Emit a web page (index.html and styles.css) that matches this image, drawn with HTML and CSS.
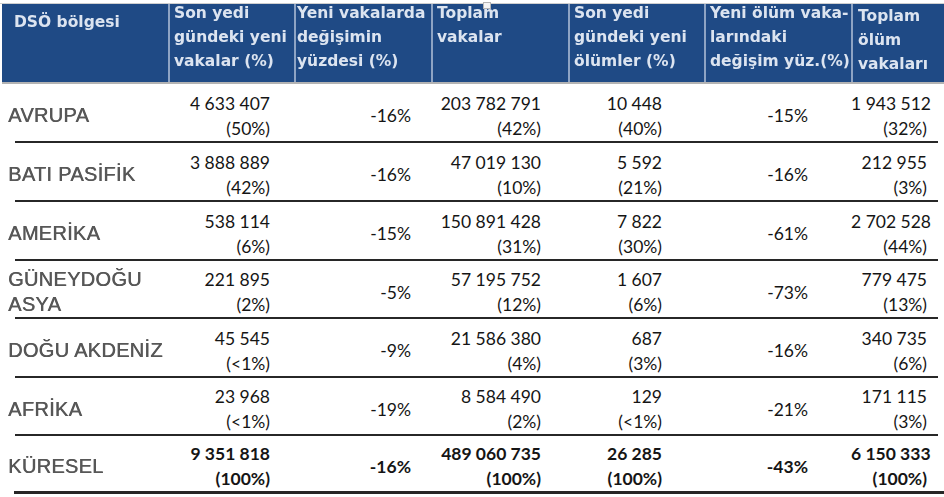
FILE: index.html
```html
<!DOCTYPE html>
<html lang="tr">
<head>
<meta charset="utf-8">
<title>DSÖ bölgeleri</title>
<link rel="stylesheet" href="styles.css">
</head>
<body>
<div class="page">
  <div class="topstrip"></div>
  <span class="handle"></span>
  <div class="table">
    <div class="head">
      <div class="hc h0"><span>DSÖ bölgesi</span></div>
      <div class="hc h1"><span>Son yedi<br>gündeki yeni<br>vakalar (%)</span></div>
      <div class="hc h2"><span>Yeni vakalarda<br>değişimin<br>yüzdesi (%)</span></div>
      <div class="hc h3"><span>Toplam<br>vakalar</span></div>
      <div class="hc h4"><span>Son yedi<br>gündeki yeni<br>ölümler (%)</span></div>
      <div class="hc h5"><span>Yeni ölüm vaka-<br>larındaki<br>değişim yüz.(%)</span></div>
      <div class="hc h6"><span>Toplam<br>ölüm<br>vakaları</span></div>
    </div>

    <div class="row r1">
      <div class="name">AVRUPA</div>
      <div class="v">4 633 407<br>(50%)</div>
      <div class="v">-16%</div>
      <div class="v">203 782 791<br>(42%)</div>
      <div class="v">10 448<br>(40%)</div>
      <div class="v">-15%</div>
      <div class="v">1 943 512<br>(32%)</div>
    </div>
    <div class="row r2">
      <div class="name">BATI PASİFİK</div>
      <div class="v">3 888 889<br>(42%)</div>
      <div class="v">-16%</div>
      <div class="v">47 019 130<br>(10%)</div>
      <div class="v">5 592<br>(21%)</div>
      <div class="v">-16%</div>
      <div class="v">212 955<br>(3%)</div>
    </div>
    <div class="row r3">
      <div class="name">AMERİKA</div>
      <div class="v">538 114<br>(6%)</div>
      <div class="v">-15%</div>
      <div class="v">150 891 428<br>(31%)</div>
      <div class="v">7 822<br>(30%)</div>
      <div class="v">-61%</div>
      <div class="v">2 702 528<br>(44%)</div>
    </div>
    <div class="row r4">
      <div class="name">GÜNEYDOĞU<br>ASYA</div>
      <div class="v">221 895<br>(2%)</div>
      <div class="v">-5%</div>
      <div class="v">57 195 752<br>(12%)</div>
      <div class="v">1 607<br>(6%)</div>
      <div class="v">-73%</div>
      <div class="v">779 475<br>(13%)</div>
    </div>
    <div class="row r5">
      <div class="name">DOĞU AKDENİZ</div>
      <div class="v">45 545<br>(&lt;1%)</div>
      <div class="v">-9%</div>
      <div class="v">21 586 380<br>(4%)</div>
      <div class="v">687<br>(3%)</div>
      <div class="v">-16%</div>
      <div class="v">340 735<br>(6%)</div>
    </div>
    <div class="row r6">
      <div class="name">AFRİKA</div>
      <div class="v">23 968<br>(&lt;1%)</div>
      <div class="v">-19%</div>
      <div class="v">8 584 490<br>(2%)</div>
      <div class="v">129<br>(&lt;1%)</div>
      <div class="v">-21%</div>
      <div class="v">171 115<br>(3%)</div>
    </div>
    <div class="row total">
      <div class="name">KÜRESEL</div>
      <div class="v">9 351 818<br>(100%)</div>
      <div class="v">-16%</div>
      <div class="v">489 060 735<br>(100%)</div>
      <div class="v">26 285<br>(100%)</div>
      <div class="v">-43%</div>
      <div class="v">6 150 333<br>(100%)</div>
    </div>
  </div>
</div>
</body>
</html>
```

FILE: styles.css
```css
html, body {
  margin: 0;
  padding: 0;
  background: #ffffff;
}

.page {
  position: relative;
  width: 944px;
  height: 497px;
  overflow: hidden;
  background: #ffffff;
}

.topstrip {
  height: 3px;
  border-bottom: 1px solid #cfcfcf;
}

.handle {
  position: absolute;
  left: 483px;
  top: 2px;
  width: 6px;
  height: 5px;
  background: #f4f4f4;
  border: 1px solid #b5b5b5;
}

.table {
  margin-left: 2px;
}

.head {
  display: grid;
  grid-template-columns: 166px 126px 137px 137px 136px 147px 93px;
  height: 78px;
  background: #1f4a85;
  border-bottom: 2px solid #b3b3b3;
}

.hc {
  color: #dce4f0;
  font-family: "DejaVu Sans", sans-serif;
  font-weight: 700;
  font-size: 15.5px;
  line-height: 24px;
  white-space: nowrap;
  border-left: 2px solid #8ea4c4;
  padding-left: 4px;
  filter: blur(0.5px);
}

.hc span {
  display: block;
  margin-top: -3px;
}

.h0 {
  border-left: none;
  padding-left: 12px;
}

.h0 span {
  margin-top: 6px;
}

.h2 {
  padding-left: 1px;
}

.h6 {
  padding-left: 5px;
}

.h6 span {
  margin-top: 0;
}

.row {
  display: grid;
  grid-template-columns: 166px 126px 137px 137px 136px 147px 93px;
  height: 59px;
  align-items: center;
  background-image: linear-gradient(#272727, #272727);
  background-repeat: no-repeat;
  background-position: left 13px bottom 0;
  background-size: calc(100% - 19px) 2px;
  box-sizing: border-box;
  padding-top: 5px;
  padding-bottom: 1px;
}

.r4, .r6 {
  height: 58px;
}

.row.total {
  height: 58px;
  padding-top: 4px;
  padding-bottom: 2px;
  background-position: left 12px bottom 0;
  background-size: calc(100% - 12px) 3px;
}

.name {
  padding-left: 6px;
  font-family: "Liberation Sans", Arial, sans-serif;
  font-size: 20px;
  line-height: 25px;
  letter-spacing: 0.3px;
  color: #575757;
  text-shadow: 0.5px 0 0 #575757;
  filter: blur(0.65px);
  white-space: nowrap;
}

.v {
  text-align: right;
  font-family: Lato, "Open Sans", sans-serif;
  font-size: 17.5px;
  line-height: 25px;
  color: #151515;
  white-space: nowrap;
}

.row > .v:nth-child(2) { padding-right: 24px; }
.row > .v:nth-child(3) { padding-right: 20px; }
.row > .v:nth-child(4) { padding-right: 27px; }
.row > .v:nth-child(5) { padding-right: 42px; }
.row > .v:nth-child(6) { padding-right: 43px; }
.row > .v:nth-child(7) { padding-right: 17px; }

.total .v {
  font-weight: 700;
}
```
